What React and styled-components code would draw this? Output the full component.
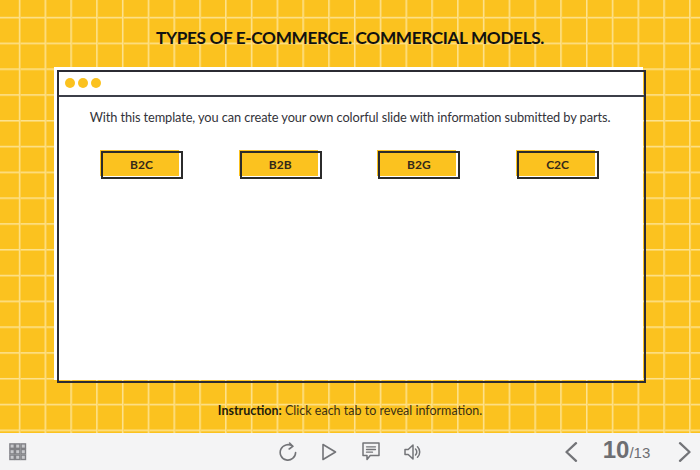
import React from "react";
import styled, { createGlobalStyle } from "styled-components";

const Global = createGlobalStyle`
  html, body { margin: 0; padding: 0; background: #f4f4f5; }
  #root { width: 700px; height: 470px; overflow: hidden; }
`;

const Page = styled.div`
  width: 700px;
  height: 470px;
  display: flex;
  flex-direction: column;
  font-family: Lato, "Open Sans", sans-serif;
  color: #26262b;
`;

const Stage = styled.main`
  height: 433px;
  box-sizing: border-box;
  display: flex;
  flex-direction: column;
  align-items: flex-start;
  background-color: #fbc21f;
  background-image:
    linear-gradient(to right, #fde28f 0, #fde28f 1px, #fcd45f 1px, #fcd45f 2px, transparent 2px),
    linear-gradient(to bottom, #fde28f 0, #fde28f 1px, #fcd45f 1px, #fcd45f 2px, transparent 2px);
  background-size: 25.79px 25.8px;
  background-position: 18.8px 16.8px;
`;

const Title = styled.h1`
  align-self: stretch;
  margin: 0;
  height: 67px;
  padding-top: 26px;
  box-sizing: border-box;
  text-align: center;
  font-size: 17.2px;
  letter-spacing: -0.35px;
  line-height: 24px;
  font-weight: 700;
  color: #111;
`;

const Card = styled.section`
  position: relative;
  margin-left: 54px;
  width: 589px;
  height: 313px;
  background: #fff;
  padding: 3px 0 0 3px;
  box-sizing: border-box;
  display: flex;
  flex-direction: column;
  &::after {
    content: "";
    position: absolute;
    left: 3px;
    top: 3px;
    width: 589px;
    height: 313px;
    box-sizing: border-box;
    border: 2px solid #2b2b33;
    pointer-events: none;
  }
`;

const CardHeader = styled.div`
  width: 589px;
  height: 27px;
  box-sizing: border-box;
  border-bottom: 2px solid #3c3f48;
  display: flex;
  align-items: center;
  gap: 3px;
  padding: 0 0 0 8px;
`;

const Dot = styled.span`
  width: 10px;
  height: 10px;
  border-radius: 50%;
  background: #fbc21f;
`;

const Lead = styled.p`
  margin: 10px 0 0;
  width: 586px;
  text-align: center;
  font-size: 12.8px;
  letter-spacing: -0.1px;
  line-height: 20px;
  color: #33333a;
`;

const Tabs = styled.div`
  display: flex;
  gap: 56.7px;
  margin: 23px 0 0 43px;
`;

const Tab = styled.button`
  position: relative;
  width: 79px;
  height: 26px;
  margin: 0 3px 3px 0;
  padding: 2px 0 0 4px;
  border: 0;
  background: #fbc21f;
  font-family: inherit;
  font-size: 12px;
  font-weight: 700;
  color: #33291a;
  &::after {
    content: "";
    position: absolute;
    left: 1px;
    top: 1px;
    width: 82px;
    height: 28px;
    box-sizing: border-box;
    border: 2px solid #2b2b2b;
  }
`;

const Instruction = styled.p`
  align-self: stretch;
  margin: 22px 0 0;
  text-align: center;
  font-size: 12.5px;
  line-height: 18px;
  color: #3a2f14;
  b { font-weight: 700; color: #221c0c; }
`;

const Bar = styled.footer`
  height: 37px;
  display: grid;
  grid-template-columns: 267px 1fr 136px;
  align-items: center;
  background: #f4f4f5;
  color: #737478;
`;

const IconButton = styled.span`
  display: flex;
  justify-content: center;
  width: ${(p) => p.$w || 41.6}px;
  svg { display: block; }
`;

const Left = styled.div`
  padding-left: 9px;
  display: flex;
`;

const Center = styled.div`
  display: flex;
  align-items: center;
`;

const Right = styled.div`
  display: flex;
  align-items: center;
`;

const Pager = styled.div`
  width: 100px;
  box-sizing: border-box;
  padding-right: 3px;
  text-align: center;
  font-family: "Liberation Sans", Arial, sans-serif;
  color: #6d6e72;
  line-height: 30px;
`;

const Current = styled.span`
  font-size: 24px;
  font-weight: 700;
`;

const Total = styled.span`
  font-size: 15px;
`;

const GridIcon = () => {
  const cells = [];
  for (let r = 0; r < 3; r++)
    for (let c = 0; c < 3; c++)
      cells.push(<rect key={`${r}-${c}`} x={0.9 + c * 5.6} y={0.9 + r * 5.6} width={4.4} height={4.4} fill="#c8c9cc" stroke="#808185" strokeWidth="1.4" />);
  return <svg width="18" height="18" viewBox="0 0 18 18">{cells}</svg>;
};

const stroke = { fill: "none", stroke: "currentColor", strokeWidth: 1.6, strokeLinecap: "round", strokeLinejoin: "round" };

const Replay = () => (
  <svg width="18" height="20" viewBox="0 0 18 20" {...stroke}>
    <path d="M13.5 4.2A7.7 7.7 0 1 0 16.6 10.5" />
    <path d="M10.6 1l3.2 3.4-3.6 2.6" />
  </svg>
);
const Play = () => (
  <svg width="16" height="18" viewBox="0 0 16 18" {...stroke}><path d="M2 1.5L14.5 9 2 16.5z" /></svg>
);
const Comment = () => (
  <svg width="18" height="19" viewBox="0 0 18 19" {...stroke} strokeWidth="1.5">
    <path d="M1 1h16v12.5H8.2L5 17.5v-4H1z" />
    <path d="M4.5 4.8h9M4.5 7.5h9M4.5 10.2h6" strokeWidth="1.3" />
  </svg>
);
const Sound = () => (
  <svg width="17" height="18" viewBox="0 0 17 18" {...stroke} strokeWidth="1.5">
    <path d="M1 6.5h3.2L9 2v14l-4.8-4.5H1z" />
    <path d="M11.5 6a4.2 4.2 0 0 1 0 6M13.5 3.8a7.2 7.2 0 0 1 0 10.4" />
  </svg>
);
const Prev = () => (
  <svg width="14" height="20" viewBox="0 0 14 20" {...stroke} strokeWidth="2.3"><path d="M12 1.2L2.5 10l9.5 8.8" /></svg>
);
const Next = () => (
  <svg width="14" height="20" viewBox="0 0 14 20" {...stroke} strokeWidth="2.3"><path d="M2 1.2L11.5 10 2 18.8" /></svg>
);

export default function App() {
  return (
    <Page>
      <Global />
      <Stage>
        <Title>TYPES OF E-COMMERCE. COMMERCIAL MODELS.</Title>
        <Card>
          <CardHeader><Dot /><Dot /><Dot /></CardHeader>
          <Lead>With this template, you can create your own colorful slide with information submitted by parts.</Lead>
          <Tabs>
            {["B2C", "B2B", "B2G", "C2C"].map((t) => <Tab key={t}>{t}</Tab>)}
          </Tabs>
        </Card>
        <Instruction><b>Instruction:</b> Click each tab to reveal information.</Instruction>
      </Stage>
      <Bar>
        <Left><IconButton $w={18}><GridIcon /></IconButton></Left>
        <Center>
          <IconButton><Replay /></IconButton>
          <IconButton><Play /></IconButton>
          <IconButton><Comment /></IconButton>
          <IconButton><Sound /></IconButton>
        </Center>
        <Right>
          <IconButton $w={14}><Prev /></IconButton>
          <Pager><Current>10</Current><Total>/13</Total></Pager>
          <IconButton $w={14}><Next /></IconButton>
        </Right>
      </Bar>
    </Page>
  );
}
